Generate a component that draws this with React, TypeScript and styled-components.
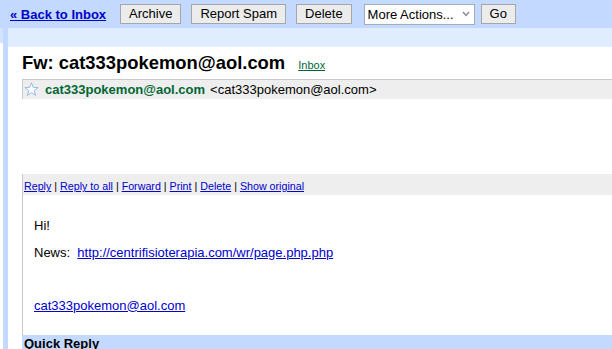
import React from "react";
import styled, { createGlobalStyle } from "styled-components";

const Global = createGlobalStyle`
  html, body { margin: 0; padding: 0; background: #fff; overflow: hidden; }
  body { font-family: "Liberation Sans", Arial, sans-serif; font-size: 13px; color: #000; }
  #root { width: 612px; height: 349px; overflow: hidden; }
`;

const Toolbar = styled.div`
  height: 28px;
  background: #c3d9ff;
  display: flex;
  align-items: center;
  padding-left: 10px;
  white-space: nowrap;
`;

const BackLink = styled.a`
  font-weight: bold;
  font-size: 13px;
  line-height: 15px;
  color: #0000cc;
  text-decoration: underline;
  margin-right: 14px;
`;

const Button = styled.div<{ $gap?: number }>`
  height: 18px;
  line-height: 18px;
  padding: 0 8px;
  border: 1px solid #a6a6a6;
  background: #ececec;
  font-size: 13px;
  margin-right: ${(p) => p.$gap ?? 10}px;
  box-sizing: content-box;
`;

const Select = styled.div`
  height: 19px;
  width: 102px;
  border: 1px solid #a5acb2;
  background: #fff;
  display: flex;
  align-items: center;
  justify-content: space-between;
  padding: 0 4px 0 3px;
  box-sizing: content-box;
  margin-right: 6px;
  margin-left: 2px;
  font-size: 13px;
  line-height: 19px;
`;

const Main = styled.div`
  display: flex;
  min-height: 321px;
`;

const Gutter = styled.div`
  width: 3px;
  flex-shrink: 0;
  display: flex;
  flex-direction: column;
`;

const GutterTop = styled.div`
  height: 15px;
  background: #d3e3ff;
`;

const Rail = styled.div`
  width: 5px;
  flex-shrink: 0;
  background: #c3d9ff;
`;

const Content = styled.div`
  flex: 1;
  min-width: 0;
  display: flex;
  flex-direction: column;
  & > * { flex-shrink: 0; }
`;

const Band = styled.div`
  height: 19px;
  background: #e0ecff;
`;

const Message = styled.div`
  padding-left: 14px;
  display: flex;
  flex-direction: column;
  & > * { flex-shrink: 0; }
`;

const TitleRow = styled.div`
  margin-top: 5px;
  display: flex;
  align-items: baseline;
  white-space: nowrap;
`;

const Title = styled.h1`
  margin: 0;
  font-size: 18.4px;
  line-height: 22px;
  font-weight: bold;
`;

const Label = styled.a`
  margin-left: 13px;
  font-size: 11px;
  color: #006633;
  text-decoration: underline;
`;

const HeaderBox = styled.div`
  margin-top: 5px;
  height: 19px;
  border-top: 1px solid #c9c9c9;
  border-left: 1px solid #c9c9c9;
  background: #eeeeee;
  display: flex;
  align-items: center;
  padding-left: 1px;
  white-space: nowrap;
  line-height: 19px;
`;

const Sender = styled.span`
  font-weight: bold;
  color: #006633;
  margin-left: 6px;
  margin-right: 5px;
`;

const Spacer = styled.div`
  height: 75px;
`;

const BodyBox = styled.div`
  border-left: 1px solid #c9c9c9;
  display: flex;
  flex-direction: column;
`;

const ActionBar = styled.div`
  height: 21px;
  box-sizing: border-box;
  padding: 4px 0 0 1px;
  background: #eeeeee;
  font-size: 10.7px;
  line-height: 17px;
  white-space: nowrap;
`;

const ActionLink = styled.a`
  color: #0000cc;
  text-decoration: underline;
`;

const BodyText = styled.div`
  padding: 18px 0 16px 11px;
  font-size: 13px;
  line-height: 26.5px;
  white-space: nowrap;
`;

const Line = styled.div`
  height: 26.5px;
`;

const Link = styled.a`
  color: #0000cc;
  text-decoration: underline;
`;

const QuickReply = styled.div`
  background: #c3d9ff;
  font-weight: bold;
  font-size: 13px;
  line-height: 18px;
  padding: 0 0 0 2px;
  height: 30px;
`;

const Star = () => (
  <svg width="15" height="15" viewBox="0 0 15 15">
    <polygon
      points="7.5,0.7 9.2,5.35 14.16,5.54 10.26,8.6 11.61,13.36 7.5,10.6 3.39,13.36 4.74,8.6 0.84,5.54 5.8,5.35"
      fill="#fff"
      stroke="#97b9ef"
      strokeWidth="1"
      strokeLinejoin="round"
    />
  </svg>
);

const Chevron = () => (
  <svg width="8" height="6" viewBox="0 0 8 6">
    <polyline points="1,1 4,4.5 7,1" fill="none" stroke="#8a8a8a" strokeWidth="1.4" />
  </svg>
);

const actions = ["Reply", "Reply to all", "Forward", "Print", "Delete", "Show original"];

export default function App() {
  return (
    <>
      <Global />
      <Toolbar>
        <BackLink>« Back to Inbox</BackLink>
        <Button>Archive</Button>
        <Button>Report Spam</Button>
        <Button>Delete</Button>
        <Select>
          <span>More Actions...</span>
          <Chevron />
        </Select>
        <Button $gap={0}>Go</Button>
      </Toolbar>
      <Main>
        <Gutter>
          <GutterTop />
        </Gutter>
        <Rail />
        <Content>
          <Band />
          <Message>
            <TitleRow>
              <Title>Fw: cat333pokemon@aol.com</Title>
              <Label>Inbox</Label>
            </TitleRow>
            <HeaderBox>
              <Star />
              <Sender>cat333pokemon@aol.com</Sender>
              <span>&lt;cat333pokemon@aol.com&gt;</span>
            </HeaderBox>
            <Spacer />
            <BodyBox>
              <ActionBar>
                {actions.map((a, i) => (
                  <React.Fragment key={a}>
                    {i > 0 && " | "}
                    <ActionLink>{a}</ActionLink>
                  </React.Fragment>
                ))}
              </ActionBar>
              <BodyText>
                <Line>Hi!</Line>
                <Line>
                  News:&nbsp;&nbsp;<Link>http://centrifisioterapia.com/wr/page.php.php</Link>
                </Line>
                <Line />
                <Line>
                  <Link>cat333pokemon@aol.com</Link>
                </Line>
              </BodyText>
            </BodyBox>
            <QuickReply>Quick Reply</QuickReply>
          </Message>
        </Content>
      </Main>
    </>
  );
}
